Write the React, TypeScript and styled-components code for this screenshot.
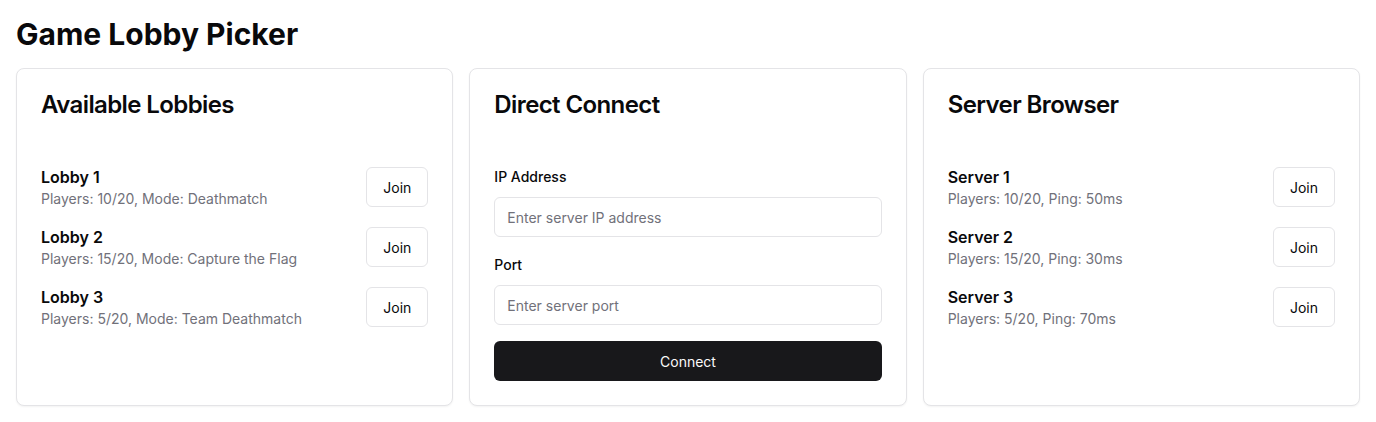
import React from 'react'
import styled, { createGlobalStyle } from 'styled-components'

const GlobalStyle = createGlobalStyle`
  * { box-sizing: border-box; }
  body {
    margin: 0;
    background: #ffffff;
    color: #09090b;
    font-family: Inter, "Noto Sans", "Liberation Sans", sans-serif;
  }
`

const lobbies = [
  { name: 'Lobby 1', info: 'Players: 10/20, Mode: Deathmatch' },
  { name: 'Lobby 2', info: 'Players: 15/20, Mode: Capture the Flag' },
  { name: 'Lobby 3', info: 'Players: 5/20, Mode: Team Deathmatch' },
]

const servers = [
  { name: 'Server 1', info: 'Players: 10/20, Ping: 50ms' },
  { name: 'Server 2', info: 'Players: 15/20, Ping: 30ms' },
  { name: 'Server 3', info: 'Players: 5/20, Ping: 70ms' },
]

const App = () => {
  return (
    <Page>
      <GlobalStyle />
      <Title>Game Lobby Picker</Title>
      <Grid>
        <Card>
          <CardHeader>
            <CardTitle>Available Lobbies</CardTitle>
          </CardHeader>
          <CardContent>
            <List>
              {lobbies.map((l) => (
                <Row key={l.name}>
                  <div>
                    <ItemName>{l.name}</ItemName>
                    <ItemInfo>{l.info}</ItemInfo>
                  </div>
                  <OutlineButton>Join</OutlineButton>
                </Row>
              ))}
            </List>
          </CardContent>
        </Card>

        <Card>
          <CardHeader>
            <CardTitle>Direct Connect</CardTitle>
          </CardHeader>
          <CardContent>
            <Form>
              <Field>
                <Label htmlFor="ip">IP Address</Label>
                <Input id="ip" placeholder="Enter server IP address" />
              </Field>
              <Field>
                <Label htmlFor="port">Port</Label>
                <Input id="port" placeholder="Enter server port" />
              </Field>
              <PrimaryButton>Connect</PrimaryButton>
            </Form>
          </CardContent>
        </Card>

        <Card>
          <CardHeader>
            <CardTitle>Server Browser</CardTitle>
          </CardHeader>
          <CardContent>
            <List>
              {servers.map((s) => (
                <Row key={s.name}>
                  <div>
                    <ItemName>{s.name}</ItemName>
                    <ItemInfo>{s.info}</ItemInfo>
                  </div>
                  <OutlineButton>Join</OutlineButton>
                </Row>
              ))}
            </List>
          </CardContent>
        </Card>
      </Grid>
    </Page>
  )
}

export default App

const Page = styled.div`
  padding: 16px;
`

const Title = styled.h1`
  margin: 0 0 16px;
  font-size: 30px;
  line-height: 36px;
  font-weight: 700;
`

const Grid = styled.div`
  display: grid;
  grid-template-columns: repeat(3, 1fr);
  gap: 16px;
`

const Card = styled.div`
  background: #ffffff;
  border: 1px solid #e4e4e7;
  border-radius: 8px;
  box-shadow: 0 1px 2px rgba(0, 0, 0, 0.05);
`

const CardHeader = styled.div`
  padding: 24px 24px 48px;
`

const CardTitle = styled.h3`
  margin: 0;
  font-size: 24px;
  line-height: 24px;
  font-weight: 600;
  letter-spacing: -0.6px;
`

const CardContent = styled.div`
  padding: 0 24px 24px;
`

const List = styled.div`
  display: flex;
  flex-direction: column;
  gap: 16px;
`

const Row = styled.div`
  display: flex;
  justify-content: space-between;
  align-items: center;
`

const ItemName = styled.div`
  font-size: 16px;
  line-height: 24px;
  font-weight: 600;
`

const ItemInfo = styled.div`
  font-size: 14px;
  line-height: 20px;
  color: #71717a;
`

const OutlineButton = styled.button`
  height: 40px;
  padding: 0 16px;
  background: #ffffff;
  border: 1px solid #e4e4e7;
  border-radius: 6px;
  font-family: inherit;
  font-size: 14px;
  font-weight: 400;
  color: #09090b;
`

const Form = styled.div`
  display: flex;
  flex-direction: column;
  gap: 16px;
`

const Field = styled.div`
  display: flex;
  flex-direction: column;
  gap: 8px;
`

const Label = styled.label`
  font-size: 14px;
  line-height: 24px;
  font-weight: 500;
`

const Input = styled.input`
  height: 40px;
  width: 100%;
  padding: 0 12px;
  border: 1px solid #e4e4e7;
  border-radius: 6px;
  font-family: inherit;
  font-size: 14px;
  color: #09090b;
  background: #ffffff;
  outline: none;

  &::placeholder {
    color: #71717a;
  }
`

const PrimaryButton = styled.button`
  height: 40px;
  width: 100%;
  border: none;
  border-radius: 6px;
  background: #18181b;
  color: #fafafa;
  font-family: inherit;
  font-size: 14px;
  font-weight: 400;
`
